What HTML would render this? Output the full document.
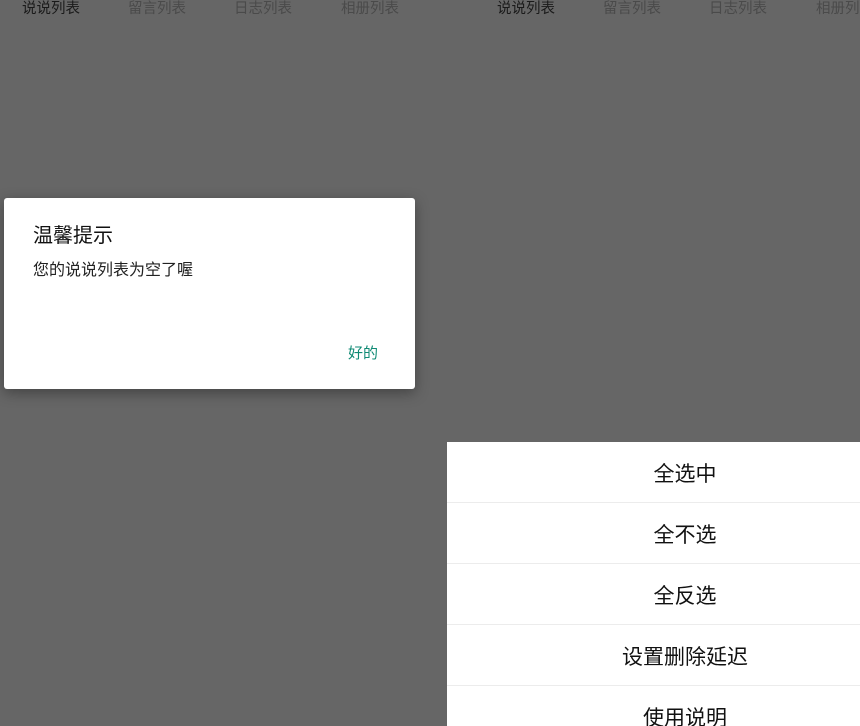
<!DOCTYPE html>
<html><head><meta charset="utf-8"><style>
*{margin:0;padding:0;box-sizing:border-box}
html,body{width:860px;height:726px;overflow:hidden}
body{background:#666;position:relative;font-family:"Liberation Sans","Noto Sans CJK SC",sans-serif}
.t{position:absolute;top:-1px;font-size:14.5px;line-height:20px;color:#4a4a4a;white-space:nowrap}
.t.a{color:#1a1a1a}
.dlg{position:absolute;left:4px;top:198px;width:411px;height:191px;background:#fff;border-radius:3px;box-shadow:0 4px 14px rgba(0,0,0,.35)}
.dlg h1{position:absolute;left:29px;top:25px;font-size:20px;font-weight:normal;color:#111;line-height:26px}
.dlg p{position:absolute;left:29px;top:62px;font-size:16px;color:#222;line-height:22px}
.dlg b{position:absolute;left:344px;top:146px;font-size:15px;font-weight:normal;color:#0f8a74;line-height:20px}
.sheet{position:absolute;left:447px;top:442px;width:476px;height:284px;background:#fff;overflow:hidden}
.r{height:61px;border-bottom:1px solid #ececec;text-align:center;line-height:65px;font-size:21px;color:#111}
</style></head><body>
<div class="t a" style="left:22px">说说列表</div>
<div class="t" style="left:128px">留言列表</div>
<div class="t" style="left:234px">日志列表</div>
<div class="t" style="left:341px">相册列表</div>
<div class="t a" style="left:497px">说说列表</div>
<div class="t" style="left:603px">留言列表</div>
<div class="t" style="left:709px">日志列表</div>
<div class="t" style="left:816px">相册列表</div>
<div class="dlg"><h1>温馨提示</h1><p>您的说说列表为空了喔</p><b>好的</b></div>
<div class="sheet">
<div class="r">全选中</div>
<div class="r">全不选</div>
<div class="r">全反选</div>
<div class="r">设置删除延迟</div>
<div class="r" style="border:none">使用说明</div>
</div>
</body></html>
